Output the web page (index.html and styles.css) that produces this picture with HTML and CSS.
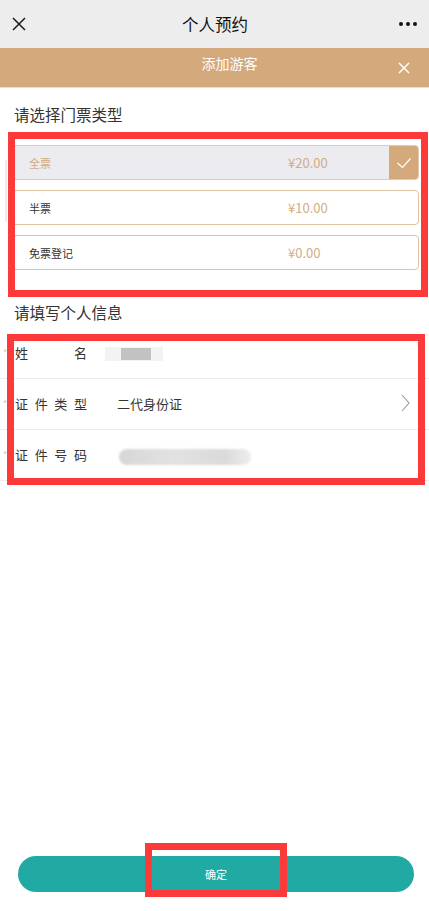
FILE: index.html
```html
<!DOCTYPE html>
<html lang="zh-CN">
<head>
<meta charset="utf-8">
<title>个人预约</title>
<link rel="stylesheet" href="styles.css">
</head>
<body>
<div class="page">
  <header class="nav">
    <svg class="nav-close" width="14" height="14" viewBox="0 0 14 14"><path d="M1 1L13 13M13 1L1 13" stroke="#1a1a1a" stroke-width="1.5" fill="none"/></svg>
    <div class="nav-title">个人预约</div>
    <svg class="nav-more" width="20" height="6" viewBox="0 0 20 6"><circle cx="3" cy="3" r="2" fill="#111"/><circle cx="10" cy="3" r="2" fill="#111"/><circle cx="17" cy="3" r="2" fill="#111"/></svg>
  </header>
  <div class="subbar">
    <span class="subbar-title">添加游客</span>
    <svg class="subbar-close" width="12" height="12" viewBox="0 0 12 12"><path d="M1 1L11 11M11 1L1 11" stroke="#fff" stroke-width="1.5" fill="none"/></svg>
  </div>

  <h2 class="section-title first">请选择门票类型</h2>
  <div class="tickets">
    <div class="ticket selected">
      <span class="t-name">全票</span>
      <span class="t-price">¥20.00</span>
      <span class="t-check"><svg width="16" height="12" viewBox="0 0 16 12"><path d="M1.5 6L6.5 10.5L14.5 1.5" stroke="#fff" stroke-width="1.2" fill="none"/></svg></span>
    </div>
    <div class="ticket">
      <span class="t-name">半票</span>
      <span class="t-price">¥10.00</span>
    </div>
    <div class="ticket">
      <span class="t-name">免票登记</span>
      <span class="t-price">¥0.00</span>
    </div>
  </div>

  <h2 class="section-title second">请填写个人信息</h2>
  <div class="info">
    <div class="row">
      <span class="star">*</span>
      <span class="label">姓名</span>
      <span class="value"><span class="blur-name"><span class="blur-core"></span></span></span>
    </div>
    <div class="row">
      <span class="star">*</span>
      <span class="label">证件类型</span>
      <span class="value">二代身份证</span>
      <svg class="chev" width="9" height="18" viewBox="0 0 9 18"><path d="M1 1L8 9L1 17" stroke="#999" stroke-width="1.1" fill="none"/></svg>
    </div>
    <div class="row">
      <span class="star">*</span>
      <span class="label">证件号码</span>
      <span class="value"><span class="blur-id"></span></span>
    </div>
  </div>

  <div class="footer">
    <button class="confirm">确定</button>
  </div>

  <div class="mark mark-tickets"></div>
  <div class="mark mark-info"></div>
  <div class="mark mark-btn"></div>
  <div class="edge-strip"></div>
</div>
</body>
</html>
```

FILE: styles.css
```css
* { box-sizing: border-box; }
html, body { margin: 0; padding: 0; }
body {
  width: 429px;
  height: 911px;
  background: #fff;
  font-family: "Noto Sans CJK SC", "Noto Sans", sans-serif;
  color: #333;
  overflow: hidden;
}
.page {
  position: relative;
  height: 911px;
  display: flex;
  flex-direction: column;
}
.nav {
  height: 48px;
  background: #ededed;
  display: flex;
  align-items: center;
  justify-content: space-between;
  padding: 0 11px 0 12px;
}
.nav-title {
  font-size: 16.5px;
  color: #111;
  margin-left: 6px;
}
.subbar {
  height: 40px;
  background: #d4a97b;
  display: flex;
  align-items: center;
  justify-content: center;
  position: relative;
  border-bottom: 1px solid #efdcc5;
  padding-left: 30px;
}
.subbar-title {
  color: #fff;
  font-size: 14px;
  margin-top: -10px;
}
.subbar-close {
  position: absolute;
  right: 19px;
  top: 14px;
}
.section-title {
  margin: 0;
  font-weight: normal;
  font-size: 15.5px;
  line-height: 20px;
  color: #333;
  padding-left: 14px;
}
.section-title.first { padding-top: 16px; height: 57px; }
.section-title.second { padding-top: 32px; height: 58px; }
.tickets {
  display: flex;
  flex-direction: column;
  gap: 10px;
  padding: 0 10px 0 12px;
  height: 125px;
}
.ticket {
  height: 35px;
  border: 1px solid #dcc4a4;
  border-radius: 4px;
  display: flex;
  align-items: center;
  background: #fff;
  overflow: hidden;
}
.ticket.selected { background: #ebebf0; border-color: #e0cbb0; }
.t-name {
  font-size: 11px;
  color: #333;
  padding-left: 16px;
  width: 275px;
}
.ticket.selected .t-name { color: #d3ad84; }
.t-price {
  font-size: 13px;
  color: #d3ad84;
  flex: 1;
}
.t-check {
  width: 30px;
  height: 35px;
  background: #d4a97b;
  display: flex;
  align-items: center;
  justify-content: center;
  margin-right: -1px;
}
.info { display: flex; flex-direction: column; }
.row {
  height: 51px;
  border-bottom: 1px solid #ececec;
  display: flex;
  align-items: center;
  padding-right: 19px;
  padding-bottom: 2px;
}
.star {
  width: 15px;
  padding-left: 3px;
  font-size: 9px;
  color: #d8c3a5;
}
.label {
  width: 72px;
  font-size: 13px;
  color: #333;
  text-align: justify;
  text-align-last: justify;
  margin-right: 30px;
}
.value {
  flex: 1;
  font-size: 13px;
  color: #333;
}
.blur-name {
  display: inline-block;
  width: 58px;
  height: 14px;
  margin-left: -12px;
  background: #f3f3f3;
  vertical-align: middle;
  position: relative;
  filter: blur(0.6px);
}
.blur-core {
  position: absolute;
  left: 16px;
  top: 1px;
  width: 30px;
  height: 12px;
  background: #c2c2c2;
}
.blur-id {
  display: inline-block;
  width: 132px;
  height: 16px;
  margin-left: 2px;
  margin-top: 4px;
  border-radius: 8px;
  background: linear-gradient(90deg, #d6d6d6 0%, #e2e2e2 40%, #dadada 80%, #eeeeee 100%);
  vertical-align: middle;
  filter: blur(1.2px);
}
.chev { display: block; }
.footer {
  margin-top: auto;
  padding: 0 15px 19px 18px;
}
.confirm {
  display: block;
  width: 100%;
  height: 36px;
  border: none;
  border-radius: 18px;
  background: #20aaa3;
  color: #fff;
  font-family: "Noto Sans CJK SC", "Noto Sans", sans-serif;
  font-size: 11px;
  padding: 0;
}
.mark {
  position: absolute;
  border: 7px solid #fd3a3a;
  pointer-events: none;
}
.mark-tickets { left: 8px; top: 132px; width: 420px; height: 165px; }
.mark-info { left: 7px; top: 334px; width: 418px; height: 151px; }
.mark-btn { left: 145px; top: 843px; width: 142px; height: 54px; }
.edge-strip {
  position: absolute;
  left: 5px;
  top: 160px;
  width: 2px;
  height: 62px;
  background: #ececec;
}
```
